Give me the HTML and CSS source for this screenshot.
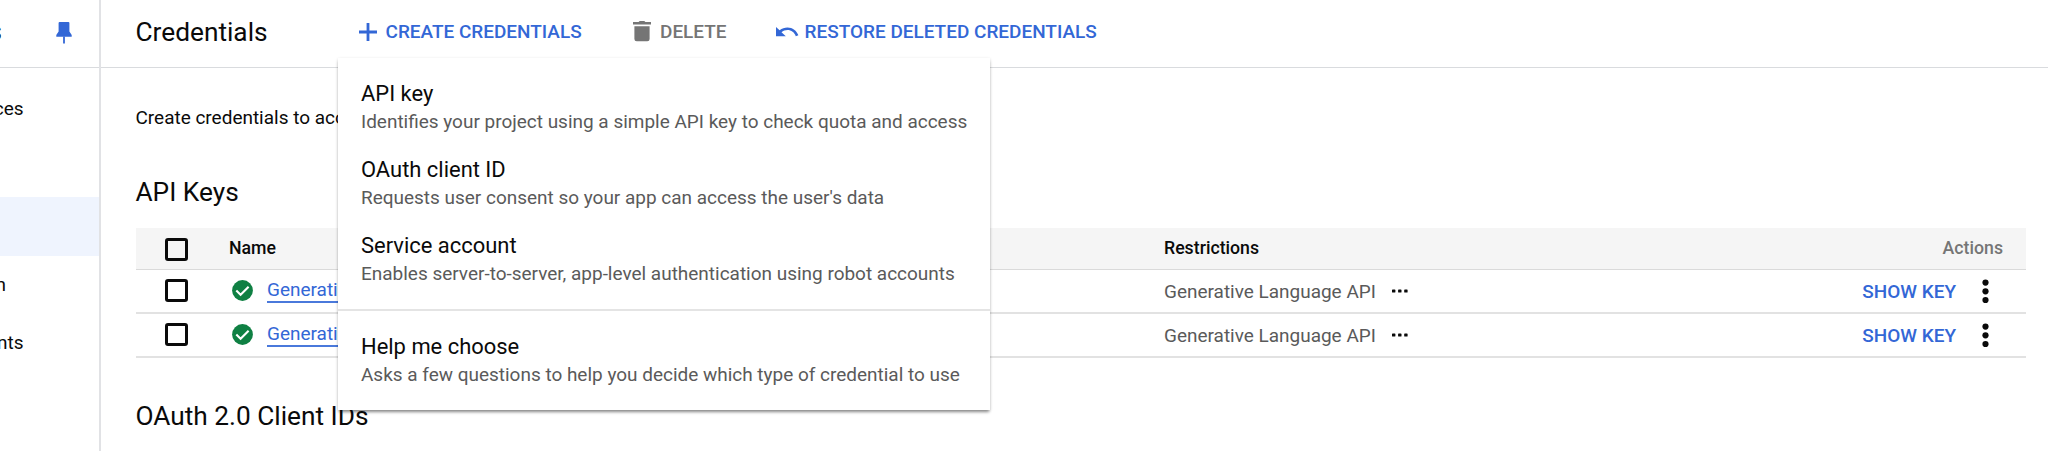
FILE: index.html
```
<!DOCTYPE html>
<html lang="en">
<head>
<meta charset="utf-8">
<title>Credentials</title>
<link rel="stylesheet" href="styles.css">
</head>
<body>
<svg class="defs" aria-hidden="true">
  <symbol id="check" viewBox="0 0 21 21"><circle cx="10.5" cy="10.5" r="10.4" fill="#0f8043"/><path d="M4.3 10.5l4.3 4.2 8-8" fill="none" stroke="#fff" stroke-width="2.1"/></symbol>
  <symbol id="more" viewBox="0 0 7 25"><circle cx="3.5" cy="3.6" r="3.1"/><circle cx="3.5" cy="12.3" r="3.1"/><circle cx="3.5" cy="21" r="3.1"/></symbol>
  <symbol id="dots" viewBox="0 0 16 4"><rect x="0" y="0.4" width="3.4" height="3.2" rx=".7"/><rect x="6.1" y="0.4" width="3.4" height="3.2" rx=".7"/><rect x="12.2" y="0.4" width="3.4" height="3.2" rx=".7"/></symbol>
</svg>
<div class="app">
  <aside class="sidebar">
    <div class="side-head"><span class="side-title">s</span>
      <svg class="pin" viewBox="0 0 16 22"><path d="M3.6 0h8.8q1 0 1 1v8.5l2.3 3.5v1.800H.3V13l2.3-3.5V1q0-1 1-1z"/><path d="M7.1 14.5h1.8V21.6H7.1z"/></svg>
    </div>
    <nav class="side-nav">
      <a class="side-item">ces</a>
      <a class="side-item"></a>
      <a class="side-item active"></a>
      <a class="side-item short">n</a>
      <a class="side-item">nts</a>
    </nav>
  </aside>
  <main class="main">
    <header class="toolbar">
      <h1>Credentials</h1>
      <button class="tool create"><svg width="18" height="18" viewBox="0 0 18 18"><path d="M7.6 0h2.8v7.6H18v2.8h-7.6V18H7.6v-7.6H0V7.6h7.6z"/></svg>CREATE CREDENTIALS</button>
      <button class="tool delete"><svg width="18" height="21" viewBox="0 0 18 21"><path d="M5.6 1.1L6.7 0h4.6l1.1 1.1H18v2.5H0V1.1zM1.4 5.2h15.2v12.7q0 2.3-2.3 2.3H3.7q-2.3 0-2.3-2.3z"/></svg>DELETE</button>
      <button class="tool restore"><svg width="23" height="10" viewBox="0 0 23 10"><path d="M0 0l3.6 3.3C6 1.3 8.6.4 11.5.4c5 0 9.2 3.2 10.9 7.9l-2.6.9c-1.3-3.7-4.5-6.2-8.3-6.2-2.3 0-4.3.8-6 2.2L9.8 9.300H0z"/></svg>RESTORE DELETED CREDENTIALS</button>
    </header>
    <div class="content">
      <p class="intro">Create credentials to acc</p>
      <h2>API Keys</h2>
      <div class="table">
        <div class="row head">
          <span class="box"></span><span class="name">Name</span><span class="restr">Restrictions</span><span class="actions">Actions</span>
        </div>
        <div class="row">
          <span class="box"></span>
          <span class="name"><svg class="ok"><use href="#check"/></svg><a class="link">Generati</a></span>
          <span class="restr">Generative Language API<svg class="dots"><use href="#dots"/></svg></span>
          <span class="actions"><a class="show">SHOW KEY</a><svg class="more"><use href="#more"/></svg></span>
        </div>
        <div class="row">
          <span class="box"></span>
          <span class="name"><svg class="ok"><use href="#check"/></svg><a class="link">Generati</a></span>
          <span class="restr">Generative Language API<svg class="dots"><use href="#dots"/></svg></span>
          <span class="actions"><a class="show">SHOW KEY</a><svg class="more"><use href="#more"/></svg></span>
        </div>
      </div>
      <h2 class="oauth">OAuth 2.0 Client IDs</h2>
    </div>
  </main>
  <div class="menu">
    <div class="group">
      <div class="item"><div class="t">API key</div><div class="d">Identifies your project using a simple API key to check quota and access</div></div>
      <div class="item"><div class="t">OAuth client ID</div><div class="d">Requests user consent so your app can access the user's data</div></div>
      <div class="item"><div class="t">Service account</div><div class="d">Enables server-to-server, app-level authentication using robot accounts</div></div>
    </div>
    <div class="group last">
      <div class="item"><div class="t">Help me choose</div><div class="d">Asks a few questions to help you decide which type of credential to use</div></div>
    </div>
  </div>
</div>
</body>
</html>
```
FILE: styles.css
```
* { box-sizing: border-box; }
body { margin: 0; background: #fff; color: #0a0a0a; font: 400 18.98px/30px Roboto, sans-serif; overflow: hidden; }
.defs { position: absolute; width: 0; height: 0; }
svg { display: block; flex: none; }
.app { position: relative; display: flex; width: 2048px; height: 451px; overflow: hidden; }

.sidebar { width: 101px; flex: none; border-right: 2px solid #e1e2e5; overflow: hidden; }
.side-head { height: 68px; border-bottom: 1px solid #d9dbde; display: flex; align-items: flex-start; justify-content: space-between; padding-right: 27px; }
.side-title { width: 2px; font-size: 26.2px; line-height: 63px; display: flex; justify-content: flex-end; }
.pin { width: 16px; height: 22px; margin-top: 22px; fill: #3367d6; }
.side-nav { padding-top: 12px; }
.side-item { display: flex; justify-content: flex-end; width: 23.5px; height: 58.5px; line-height: 58px; }
.side-item.active { width: 100%; background: #eff4fe; }
.side-item.short { width: 6px; }

.main { flex: 1; min-width: 0; }
.toolbar { height: 68px; padding: 0 0 4px 34.5px; display: flex; align-items: center; border-bottom: 1px solid #d9dbde; }
h1, h2 { margin: 0; font-size: 26.25px; font-weight: 400; line-height: 40px; }
h1 { width: 223.5px; }
.tool { border: 0; padding: 0; background: none; font: 500 18.98px/30px Roboto, sans-serif; display: flex; align-items: center; color: #3367d6; fill: #3367d6; white-space: nowrap; }
.create svg { margin-right: 8.5px; }
.create { width: 274px; }
.delete { width: 143px; color: #757575; fill: #757575; }
.delete svg { margin-right: 9px; }
.restore svg { margin-right: 5.5px; }

.content { padding: 35px 22px 0 34.5px; }
.intro { margin: 0; height: 30px; line-height: 29px; }
h2 { margin-top: 39px; }
.table { margin: 16px 0 0 .5px; }
.row { display: flex; align-items: center; height: 44px; border-bottom: 2px solid #e2e2e2; color: #5a5a5a; }
.head { height: 42px; background: #f5f5f5; border-bottom: 1px solid #dadada; font-size: 17.72px; font-weight: 500; color: #0a0a0a; }
.box { width: 23px; height: 23px; margin: 0 41px 0 29px; border: 3px solid #0a0a0a; border-radius: 3px; flex: none; }
.head .box { margin-top: 2px; }
.row:not(.head) .box { margin-bottom: 2px; }
.name { display: flex; align-items: center; width: 935px; }
.row:not(.head) .name { padding-bottom: 1px; }
.head .name, .head .restr, .head .actions { padding-bottom: 2px; }
.ok { width: 21px; height: 21px; margin: 0 14px 0 3px; }
.link { width: 90px; height: 25px; line-height: 23px; color: #3367d6; border-bottom: 2px solid #4a79db; }
.restr { flex: 1; display: flex; align-items: center; }
.row:not(.head) .restr, .row:not(.head) .actions { padding-top: 1px; }
.dots { width: 16px; height: 4px; margin: 0 0 2px 16px; }
.actions { display: flex; align-items: center; padding-right: 23px; color: #757575; }
.show { color: #3367d6; font-weight: 500; }
.row:not(.head) .actions { padding-right: 37px; }
.more { width: 7px; height: 25px; margin-left: 26px; fill: #0a0a0a; }
.dots { fill: #0a0a0a; }
.oauth { margin-top: 38px; }

.menu { position: absolute; left: 338px; top: 58px; width: 652px; height: 352px; background: #fff; box-shadow: 0 3px 3px -1px rgba(0,0,0,.4), 0 1px 3px rgba(0,0,0,.16); }
.group { height: 253px; padding: 11px 23px 0; border-bottom: 2px solid #e4e4e4; }
.group.last { height: 99px; border: 0; }
.item { padding: 9px 0; white-space: nowrap; }
.t { font-size: 21.95px; line-height: 32px; height: 30px; }
.d { line-height: 28px; color: #5a5a5a; }
```
